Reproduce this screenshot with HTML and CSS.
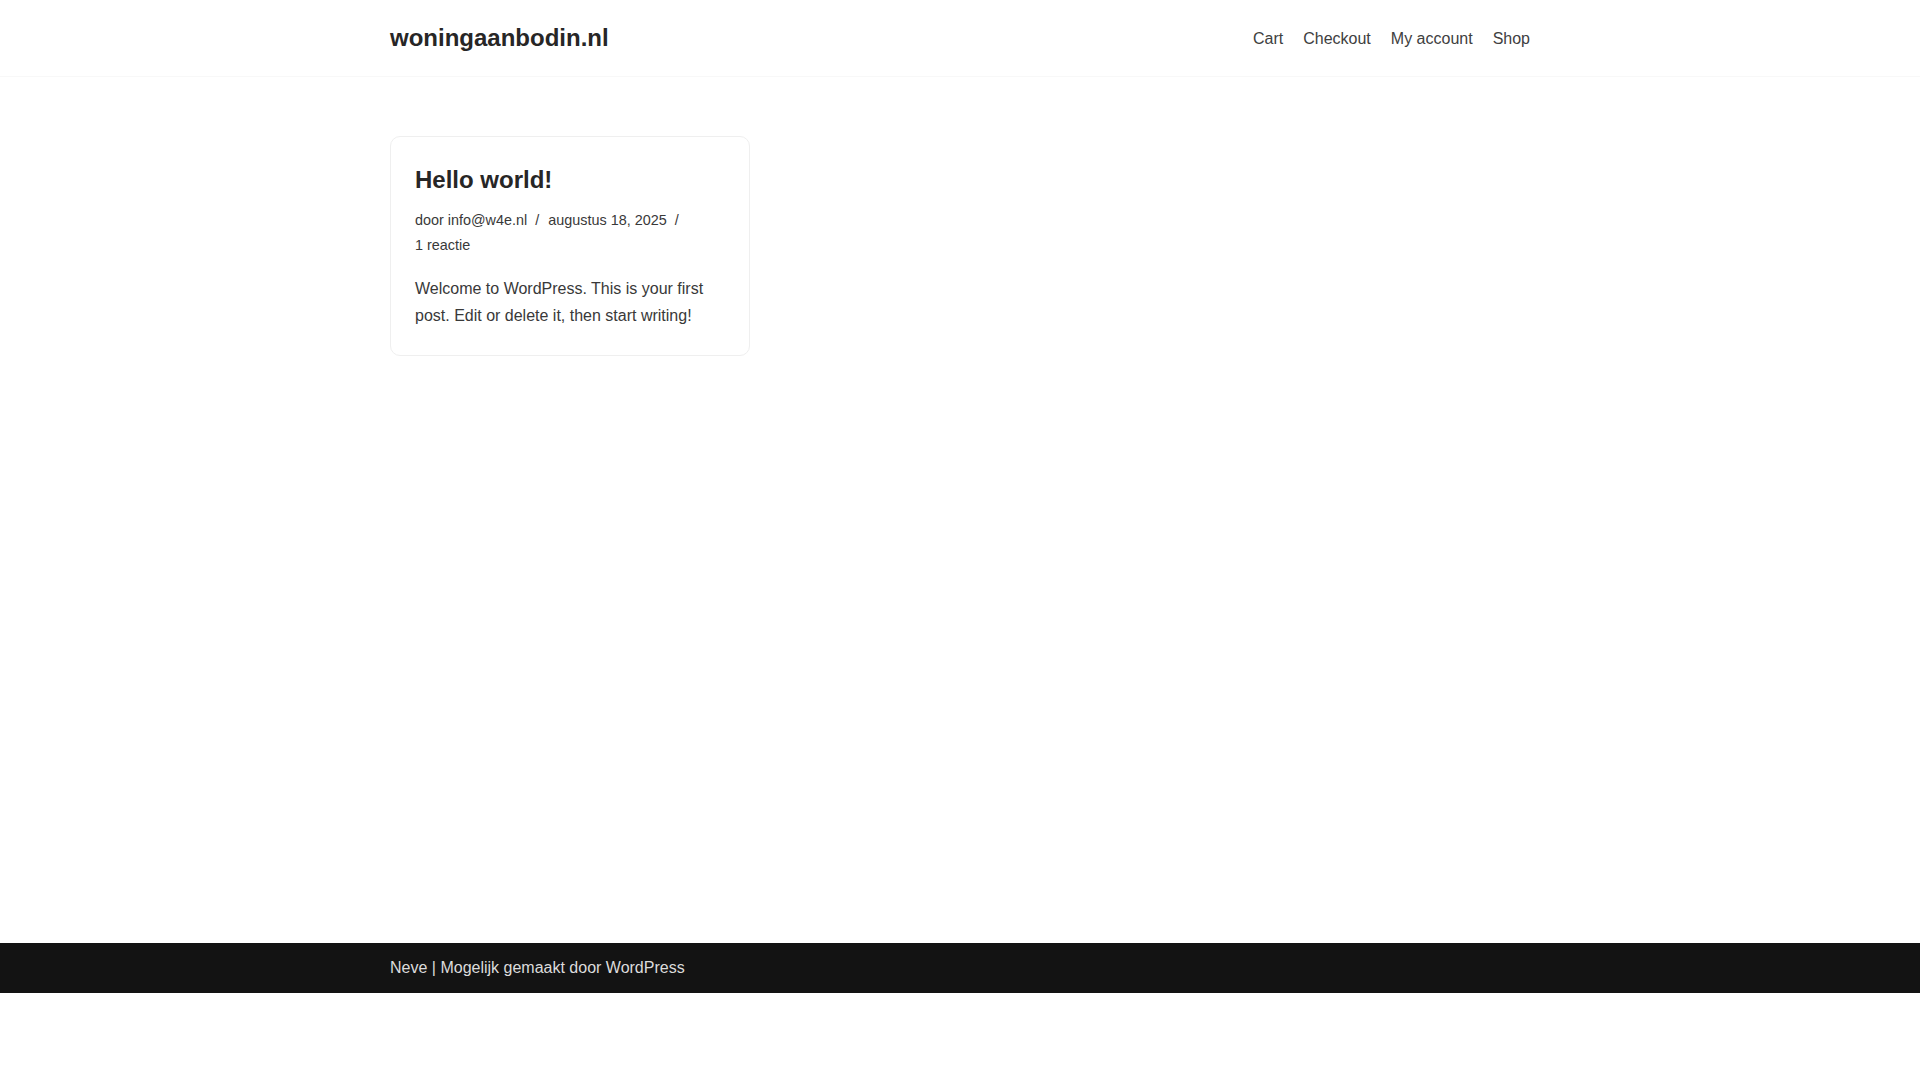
FILE: index.html
```html
<!DOCTYPE html>
<html lang="nl">

<head>
  <meta charset="UTF-8">
  <meta name="viewport" content="width=device-width, initial-scale=1.0">
  <title>woningaanbodin.nl</title>
  <link rel="stylesheet" href="styles.css">
</head>

<body>
  <header class="site-header">
    <div class="container header-inner">
      <a href="#" class="site-logo">woningaanbodin.nl</a>
      <nav class="primary-menu">
        <a href="#">Cart</a>
        <a href="#">Checkout</a>
        <a href="#">My account</a>
        <a href="#">Shop</a>
      </nav>
    </div>
  </header>

  <main class="site-main">
    <div class="container posts-grid">
      <article class="post-card">
        <h2 class="entry-title"><a href="#">Hello world!</a></h2>
        <ul class="meta-list">
          <li>door <a href="#">info@w4e.nl</a></li>
          <li>augustus 18, 2025</li>
          <li><a href="#">1 reactie</a></li>
        </ul>
        <p class="excerpt">Welcome to WordPress. This is your first post. Edit or delete it, then start writing!</p>
      </article>
    </div>
  </main>

  <footer class="site-footer">
    <div class="container footer-inner">
      <a href="#">Neve</a>&nbsp;|&nbsp;Mogelijk gemaakt door&nbsp;<a href="#">WordPress</a>
    </div>
  </footer>
</body>

</html>
```

FILE: styles.css
```css
 * {
   box-sizing: border-box;
 }

 body {
   margin: 0;
   font-family: "Liberation Sans", Arial, sans-serif;
   font-size: 16px;
   line-height: 1.7;
   color: #393939;
   background-color: #fff;
 }

 a {
   color: inherit;
   text-decoration: none;
 }

 .container {
   width: 1170px;
   margin: 0 auto;
   padding: 0 15px;
 }

 .site-header {
   border-bottom: 1px solid #f8f8f8;
 }

 .header-inner {
   display: flex;
   justify-content: space-between;
   align-items: center;
   height: 76px;
 }

 .site-logo {
   font-size: 24px;
   font-weight: bold;
   line-height: 1.2;
   color: #272626;
 }

 .primary-menu {
   display: flex;
   gap: 20px;
   font-size: 16px;
   color: #404040;
   padding-top: 2px;
 }

 .site-main {
   min-height: 866px;
   padding-top: 59px;
 }

 .posts-grid {
   display: grid;
   grid-template-columns: repeat(3, 360px);
   column-gap: 30px;
 }

 .post-card {
   padding: 24px 24px 26px;
   border: 1px solid #efefef;
   border-radius: 10px;
 }

 .entry-title {
   margin: 0 0 9px;
   font-size: 24px;
   line-height: 1.6;
   font-weight: bold;
   color: #272626;
 }

 .meta-list {
   margin: 0;
   padding: 0;
   list-style: none;
   font-size: 14.4px;
   line-height: 1.7;
 }

 .meta-list li {
   display: inline;
   white-space: nowrap;
 }

 .meta-list li:not(:last-child)::after {
   content: "/";
   padding: 0 5px 0 8px;
 }

 .excerpt {
   margin: 19px 0 0;
   font-size: 16px;
   line-height: 1.65;
 }

 .site-footer {
   background-color: #131313;
   color: #dcdcdc;
 }

 .footer-inner {
   display: flex;
   align-items: center;
   height: 50px;
   font-size: 16px;
 }
```
